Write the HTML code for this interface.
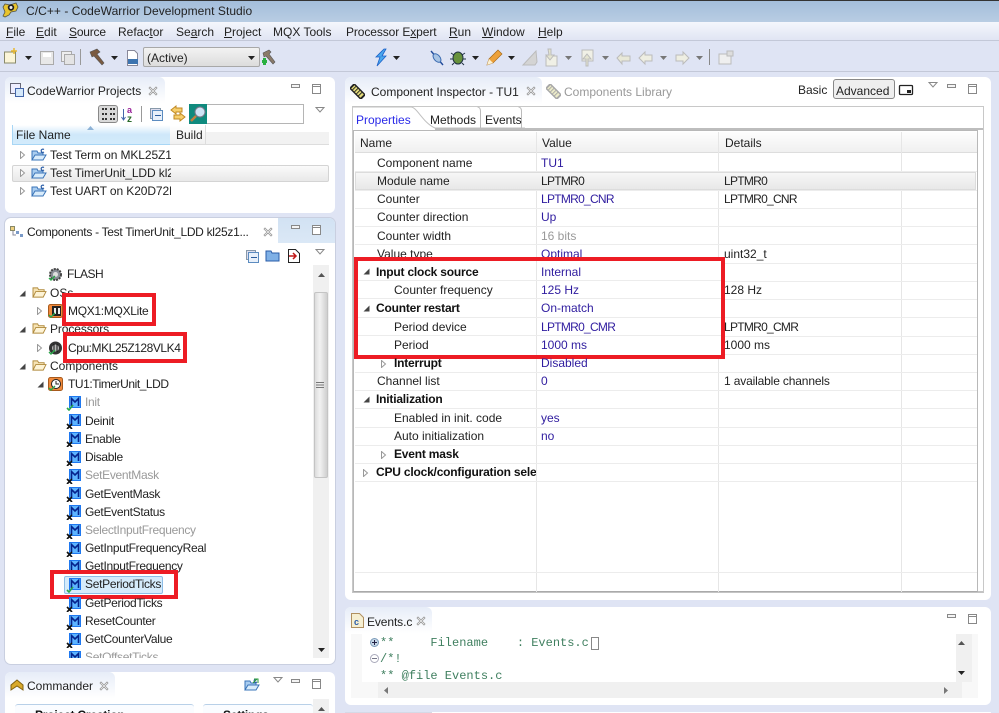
<!DOCTYPE html>
<html style="width:999px;height:713px;overflow:hidden"><head><meta charset="utf-8"><style>
html,body{margin:0;padding:0}
body{width:999px;height:713px;overflow:hidden;position:relative;background:#dfe4f4;font-family:"Liberation Sans",sans-serif;font-size:12px;color:#222}
div,span.t{position:absolute}
#root{left:0;top:0;width:999px;height:713px;overflow:hidden;background:#dfe4f4;filter:blur(.3px)}
.t{white-space:nowrap;line-height:16px}
.w{background:#fff;border-radius:6px}
.b{font-weight:bold;color:#111;letter-spacing:-.2px}
.v{color:#2f1c9f}
.g{color:#999}
.n{letter-spacing:-.3px}
.c{letter-spacing:-.72px}
svg{position:absolute;overflow:visible}
.rl{height:1px;left:355px;width:622px;background:#ececec}
.cl{width:1px;background:#e6e6e6;top:132px;height:460px}
.red{border:4px solid #ed1c24;box-sizing:border-box}
</style></head><body>
<svg width="0" height="0" style="left:0;top:0"><defs>
<symbol id="mx" viewBox="0 0 16 16"><rect x="3" y="1" width="12" height="12" fill="#1e78f0"/><rect x="4" y="2" width="10" height="10" fill="#5db4ff"/><path d="M5.500 11V3.500L9 7l3.500-3.500V11" fill="none" stroke="#06248c" stroke-width="1.600"/><path d="M1 11l5 5M6 11l-5 5" stroke="#111" stroke-width="1.600"/></symbol>
<symbol id="mc" viewBox="0 0 16 16"><rect x="3" y="1" width="12" height="12" fill="#1e78f0"/><rect x="4" y="2" width="10" height="10" fill="#5db4ff"/><path d="M5.500 11V3.500L9 7l3.500-3.500V11" fill="none" stroke="#06248c" stroke-width="1.600"/><path d="M1 13l2 2 4-5" fill="none" stroke="#2aa84a" stroke-width="1.600"/></symbol>
<symbol id="fo" viewBox="0 0 16 14"><path d="M1 12V2h5l1 2h6v2" fill="#f6e3b4" stroke="#b08a3c"/><path d="M1 12l3-6h11l-3 6z" fill="#fdf3d6" stroke="#b08a3c"/></symbol>
<symbol id="pr" viewBox="0 0 16 14"><path d="M1 12V3h5l1 2h5v2" fill="#a9cdf0" stroke="#3a74b8"/><path d="M1 12l3-5h11l-3 5z" fill="#d9ecfb" stroke="#3a74b8"/><path d="M13 1.500c-1.400-.8-3 0-2.800 1.500s1.700 1.800 2.800 1" fill="none" stroke="#2d5fa8" stroke-width="1.200"/></symbol>
<symbol id="op" viewBox="0 0 6 8"><path d="M.5.500l4 3.500-4 3.500z" fill="#fff" stroke="#999"/></symbol>
<symbol id="ex" viewBox="0 0 7 7"><path d="M6.500.5v6h-6z" fill="#444"/></symbol>
<symbol id="cx" viewBox="0 0 10 10"><path d="M1 2l1-1 3 3 3-3 1 1-3 3 3 3-1 1-3-3-3 3-1-1 3-3z" fill="#fff" stroke="#999" stroke-width=".8"/></symbol>
<symbol id="dn" viewBox="0 0 7 4"><path d="M0 0h7L3.500 4z" fill="#222"/></symbol>
<symbol id="dg" viewBox="0 0 7 4"><path d="M0 0h7L3.500 4z" fill="#777"/></symbol>
<symbol id="mn" viewBox="0 0 10 4"><rect x=".5" y=".5" width="8" height="3" fill="#f4f4f4" stroke="#888"/></symbol>
<symbol id="mxb" viewBox="0 0 10 11"><rect x=".5" y=".5" width="8" height="9" fill="#fff" stroke="#888"/><path d="M.5 2.500h8" stroke="#888"/></symbol>
<symbol id="vm" viewBox="0 0 11 6"><path d="M1 .5h8L5 5z" fill="#fff" stroke="#888"/></symbol>
<symbol id="ch" viewBox="0 0 16 16"><g transform="rotate(45 8 8)"><rect x="-1" y="4" width="18" height="8" fill="#222"/><rect x="1" y="5.500" width="14" height="5" fill="#e4dc7a"/><path d="M3 5v6M6 5v6M9 5v6M12 5v6" stroke="#222"/></g></symbol>
<symbol id="cg" viewBox="0 0 16 16"><g transform="rotate(45 8 8)"><rect x="-1" y="4" width="18" height="8" fill="#a8a8a8"/><rect x="1" y="5.500" width="14" height="5" fill="#ecebc8"/><path d="M3 5v6M6 5v6M9 5v6M12 5v6" stroke="#a8a8a8"/></g></symbol>
</defs></svg>
<div id="root">

<!-- title -->
<div style="left:0;top:0;width:999px;height:22px;background:linear-gradient(#a4bedb,#b9cde3);border-top:1px solid #333;box-sizing:border-box"></div>
<svg style="left:2px;top:2px" width="17" height="16"><path d="M1 5l2-3 5 1 6-2 2 4-2 4-5 1-2 3-4 2-2-1 2-4z" fill="#e8c42c" stroke="#554" stroke-width=".8"/><circle cx="9" cy="5.500" r="3.200" fill="#222"/><circle cx="9" cy="5.500" r="1.500" fill="#eee"/></svg>
<span class="t" style="left:26px;top:3px;color:#222;letter-spacing:.05px">C/C++ - CodeWarrior Development Studio</span>

<!-- menu -->
<div style="left:0;top:22px;width:999px;height:19px;background:linear-gradient(#f4f6fc,#e0e4f3);border-bottom:1px solid #c3c8d8;box-sizing:border-box"></div>
<span class="t" style="left:6px;top:24px"><u>F</u>ile</span>
<span class="t" style="left:36px;top:24px"><u>E</u>dit</span>
<span class="t" style="left:69px;top:24px;letter-spacing:-.2px"><u>S</u>ource</span>
<span class="t" style="left:118px;top:24px">Refac<u>t</u>or</span>
<span class="t" style="left:176px;top:24px">Se<u>a</u>rch</span>
<span class="t" style="left:224px;top:24px"><u>P</u>roject</span>
<span class="t" style="left:273px;top:24px">MQX Tools</span>
<span class="t" style="left:346px;top:24px;letter-spacing:-.1px">Processor E<u>x</u>pert</span>
<span class="t" style="left:449px;top:24px"><u>R</u>un</span>
<span class="t" style="left:482px;top:24px"><u>W</u>indow</span>
<span class="t" style="left:538px;top:24px"><u>H</u>elp</span>

<!-- toolbar -->
<div style="left:0;top:71px;width:999px;height:1px;background:#c3c8d8"></div>
<svg style="left:0;top:41px" width="999" height="30">
<path d="M4.500 11h11v11h-11z" fill="#fbf5d8" stroke="#8a8a6a"/><path d="M14 7v6M11 10h6" stroke="#e8b830" stroke-width="1.500"/>
<use href="#dn" x="25" y="15" width="7" height="4"/>
<rect x="40.500" y="10.500" width="13" height="13" fill="#e8e8e8" stroke="#aaa"/><rect x="43" y="12" width="8" height="4" fill="#fff"/>
<rect x="61.500" y="10.500" width="10" height="10" fill="#eee" stroke="#aaa"/><rect x="64.500" y="13.500" width="10" height="10" fill="#e4e4e4" stroke="#aaa"/>
<path d="M80.500 8v16" stroke="#999"/>
<path d="M90 11l7-3 3 3-3 2 7 9-2 2-8-9-2 1z" fill="#7a5a40" stroke="#555" stroke-width=".6"/>
<use href="#dn" x="111" y="15" width="7" height="4"/>
<path d="M127.500 9.500h7l3 3v12h-10z" fill="#fff" stroke="#889"/><rect x="128" y="18" width="10" height="5" fill="#3d74b0"/>
<path d="M263 12l6-3 2 2-2 2 6 8-2 2-7-8-2 1z" fill="#8a7a6a" stroke="#555" stroke-width=".6"/><path d="M262 19h5v3h-5zM263 17h3v7h-3z" fill="#28b040"/>
<path d="M384 8l-8 8h4l-3 9 9-10h-4l4-7z" fill="#4aa8ee" stroke="#1c60c8" stroke-width=".8"/><use href="#dn" x="393" y="15" width="7" height="4"/>
<path d="M431 10l12 14" stroke="#204a9a" stroke-width="1.400"/><ellipse cx="437" cy="17" rx="3" ry="5" fill="#a8c4e4" stroke="#3a6ab0" transform="rotate(-40 437 17)"/>
<ellipse cx="458" cy="17" rx="5" ry="6" fill="#67923c" stroke="#234"/><path d="M451 12l3 2M465 12l-3 2M450 18h3M466 18h-3M452 24l2-2M464 24l-2-2" stroke="#234"/>
<use href="#dn" x="472" y="15" width="7" height="4"/>
<path d="M487 24l2-6 9-9 4 4-9 9z" fill="#eda13a" stroke="#a76a18" stroke-width=".7"/><path d="M487 24l2-6 4 4z" fill="#fbf0d0"/>
<use href="#dn" x="508" y="15" width="7" height="4"/>
<path d="M523 24l13-14 1 11-2 3z" fill="#d4d4d4" stroke="#bbb"/>
<rect x="546" y="15" width="11" height="10" fill="#f0f0e6" stroke="#bbb"/><path d="M548 8h3v6h3l-4 5-4-5h3z" fill="#e4e4d0" stroke="#bbb"/>
<use href="#dg" x="565" y="15" width="7" height="4"/>
<rect x="582" y="9" width="11" height="11" fill="#f0f0e6" stroke="#bbb"/><path d="M586 25v-7h-3l4-5 4 5h-3v7z" fill="#e4e4d0" stroke="#bbb"/>
<use href="#dg" x="602" y="15" width="7" height="4"/>
<path d="M617 17l5-5v3h8v5h-8v3z" fill="#e8e8d8" stroke="#bbb"/>
<path d="M639 17l6-6v3h7v6h-7v3z" fill="#eeeee2" stroke="#bbb"/><use href="#dg" x="660" y="15" width="7" height="4"/>
<path d="M689 17l-6-6v3h-7v6h7v3z" fill="#eeeee2" stroke="#bbb"/><use href="#dg" x="696" y="15" width="7" height="4"/>
<path d="M709.500 8v16" stroke="#888"/>
<rect x="719" y="13" width="12" height="10" fill="#efefef" stroke="#bbb"/><rect x="727" y="10" width="6" height="5" fill="#ddd" stroke="#bbb"/>
</svg>
<div style="left:143px;top:47px;width:117px;height:20px;box-sizing:border-box;border:1px solid #a8a8a8;border-radius:2px;background:linear-gradient(#f2f2f2,#dcdcdc)"></div>
<span class="t" style="left:147px;top:50px">(Active)</span>
<svg style="left:248px;top:56px" width="7" height="4"><use href="#dn" width="7" height="4"/></svg>

<!-- projects panel -->
<div class="w" style="left:5px;top:77px;width:330px;height:136px"></div>
<div style="left:5px;top:77px;width:160px;height:26px;background:linear-gradient(#e7edf8,#fff);border-radius:6px 6px 0 0"></div>
<svg style="left:10px;top:83px" width="14" height="14"><rect x=".5" y=".5" width="10" height="10" fill="#eef" stroke="#667"/><rect x="5.500" y="5.500" width="8" height="8" fill="#d5e8fa" stroke="#46a"/></svg>
<span class="t" style="left:27px;top:83px">CodeWarrior Projects</span>
<svg style="left:148px;top:86px" width="10" height="10"><use href="#cx" width="10" height="10"/></svg>
<svg style="left:291px;top:84px" width="10" height="4"><use href="#mn" width="10" height="4"/></svg>
<svg style="left:312px;top:84px" width="10" height="11"><use href="#mxb" width="10" height="11"/></svg>
<div style="left:98px;top:105px;width:20px;height:18px;box-sizing:border-box;border:1px solid #888;border-radius:3px;background:#d9d9d9"></div>
<svg style="left:101px;top:107px" width="16" height="14"><path d="M1 2h5M1 7h5M1 12h5M9 2h5M9 7h5M9 12h5" stroke="#333" stroke-width="2" stroke-dasharray="2 1"/></svg>
<svg style="left:120px;top:105px" width="20" height="18"><path d="M3.500 4v11M1.500 12l2 3 2-3" fill="none" stroke="#4466aa"/><text x="7" y="8" font-size="9" font-weight="bold" fill="#992299" font-family="Liberation Sans">a</text><text x="7" y="17" font-size="10" font-weight="bold" fill="#2a6a2a" font-family="Liberation Sans">z</text></svg>
<div style="left:141px;top:106px;width:1px;height:16px;background:#999"></div>
<svg style="left:150px;top:108px" width="14" height="14"><rect x=".5" y=".5" width="10" height="10" fill="#dde" stroke="#89a"/><rect x="2.500" y="2.500" width="10" height="10" fill="#e8f0fa" stroke="#5c8cc0"/><path d="M5 7.500h6" stroke="#2c5c9c"/></svg>
<svg style="left:170px;top:105px" width="16" height="17"><path d="M1 5l5-4v2h6v4H6v2zM15 12l-5-4v2H4v4h6v2z" fill="#f6cf6e" stroke="#c08820"/></svg>
<div style="left:189px;top:104px;width:18px;height:20px;background:#0f8a7e"></div>
<svg style="left:189px;top:105px" width="18" height="18"><circle cx="11" cy="7" r="5" fill="#cfe4f6" stroke="#778"/><path d="M7 11l-5 5" stroke="#c08040" stroke-width="2.500"/></svg>
<div style="left:207px;top:104px;width:97px;height:20px;box-sizing:border-box;border:1px solid #b5b5b5;border-left:0;background:#fff"></div>
<svg style="left:315px;top:107px" width="11" height="6"><use href="#vm" width="11" height="6"/></svg>
<div style="left:12px;top:125px;width:158px;height:20px;background:linear-gradient(#fff,#cfe8fa 50%,#d3ebfb);border-left:1px solid #a8d6f5;border-bottom:1px solid #a8d6f5;box-sizing:border-box"></div>
<div style="left:170px;top:132px;width:159px;height:13px;background:#f2f2f2;border-bottom:1px solid #ddd;box-sizing:border-box"></div>
<div style="left:170px;top:125px;width:36px;height:20px;background:linear-gradient(#fff,#f0f0f0);border-right:1px solid #ddd;box-sizing:border-box;border-bottom:1px solid #ddd"></div>
<svg style="left:87px;top:126px" width="7" height="4"><path d="M0 4l3.500-4L7 4z" fill="#8db2d6"/></svg>
<span class="t" style="left:16px;top:127px">File Name</span>
<span class="t" style="left:176px;top:127px">Build</span>
<div style="left:12px;top:165px;width:317px;height:17px;background:linear-gradient(#fafafa,#e8e8e8);border:1px solid #d4d4d4;border-radius:2px;box-sizing:border-box"></div>
<svg style="left:20px;top:151px" width="6" height="8"><use href="#op" width="6" height="8"/></svg>
<svg style="left:20px;top:169px" width="6" height="8"><use href="#op" width="6" height="8"/></svg>
<svg style="left:20px;top:187px" width="6" height="8"><use href="#op" width="6" height="8"/></svg>
<svg style="left:31px;top:148px" width="16" height="14"><use href="#pr" width="16" height="14"/></svg>
<svg style="left:31px;top:166px" width="16" height="14"><use href="#pr" width="16" height="14"/></svg>
<svg style="left:31px;top:184px" width="16" height="14"><use href="#pr" width="16" height="14"/></svg>
<div style="left:50px;top:147px;width:121px;height:52px;overflow:hidden">
<span class="t" style="left:0;top:0;letter-spacing:-.1px">Test Term on MKL25Z128VLK4</span>
<span class="t" style="left:0;top:18px;letter-spacing:-.1px">Test TimerUnit_LDD kl25z128</span>
<span class="t" style="left:0;top:36px;letter-spacing:-.1px">Test UART on K20D72MPRO</span></div>

<!-- components panel -->
<div class="w" style="left:5px;top:218px;width:330px;height:446px;box-shadow:0 0 0 1px #c9cfe0"></div>
<div style="left:278px;top:218px;width:57px;height:25px;background:linear-gradient(#d2e2f3,#dbe8f6);border-radius:0 6px 0 0"></div>
<svg style="left:10px;top:226px" width="14" height="12"><rect x=".5" y=".5" width="4" height="4" fill="#eed080" stroke="#886"/><rect x="6" y="5" width="3" height="3" fill="#7a9ac8"/><rect x="10" y="8" width="3" height="3" fill="#7a9ac8"/><path d="M3 5v4h3" fill="none" stroke="#889"/></svg>
<span class="t n" style="left:27px;top:224px">Components - Test TimerUnit_LDD kl25z1...</span>
<svg style="left:263px;top:227px" width="10" height="10"><use href="#cx" width="10" height="10"/></svg>
<svg style="left:291px;top:225px" width="10" height="4"><use href="#mn" width="10" height="4"/></svg>
<svg style="left:312px;top:225px" width="10" height="11"><use href="#mxb" width="10" height="11"/></svg>
<svg style="left:246px;top:250px" width="13" height="13"><rect x=".5" y=".5" width="9" height="9" fill="#dde" stroke="#89a"/><rect x="2.500" y="2.500" width="10" height="10" fill="#e8f0fa" stroke="#5c8cc0"/><path d="M5 7.500h6" stroke="#2c5c9c"/></svg>
<svg style="left:265px;top:250px" width="15" height="12"><path d="M1 11V1h5l1 2h7v8z" fill="#7fb0e6" stroke="#2a5ca8"/></svg>
<svg style="left:288px;top:249px" width="12" height="14"><path d="M.5 .5h7l4 4v9H.5z" fill="#fff" stroke="#222"/><path d="M1 7h7M5 4l3 3-3 3" fill="none" stroke="#c01818" stroke-width="1.500"/></svg>
<svg style="left:315px;top:249px" width="11" height="6"><use href="#vm" width="11" height="6"/></svg>

<!-- scrollbar -->
<div style="left:313px;top:265px;width:16px;height:393px;background:#f0f0f0"></div>
<div style="left:314px;top:292px;width:14px;height:186px;background:linear-gradient(90deg,#dcdcdc,#f2f2f2 40%,#cfcfcf);border:1px solid #c4c4c4;box-sizing:border-box;border-radius:2px"></div>
<svg style="left:318px;top:273px" width="7" height="4"><path d="M0 4l3.500-4L7 4z" fill="#555"/></svg>
<svg style="left:318px;top:648px" width="7" height="4"><use href="#dn" width="7" height="4"/></svg>
<svg style="left:316px;top:382px" width="8" height="6"><path d="M0 .5h8M0 3h8M0 5.500h8" stroke="#777"/></svg>

<!-- tree -->
<svg style="left:48px;top:267px" width="15" height="15"><circle cx="7.500" cy="7.500" r="5.500" fill="#8a8f98" stroke="#444" stroke-width="2" stroke-dasharray="2 1"/><circle cx="7.500" cy="7.500" r="2.500" fill="#e0e0e0"/><path d="M1 11l2 2 4-4" fill="none" stroke="#2aa84a" stroke-width="1.400"/></svg>
<span class="t" style="left:67px;top:266px;letter-spacing:-.5px">FLASH</span>
<svg style="left:19px;top:290px" width="7" height="7"><use href="#ex" width="7" height="7"/></svg>
<svg style="left:32px;top:286px" width="15" height="13"><use href="#fo" width="15" height="13"/></svg>
<span class="t" style="left:50px;top:285px">OSs</span>
<svg style="left:19px;top:326px" width="7" height="7"><use href="#ex" width="7" height="7"/></svg>
<svg style="left:32px;top:322px" width="15" height="13"><use href="#fo" width="15" height="13"/></svg>
<span class="t" style="left:50px;top:321px;letter-spacing:-.1px">Processors</span>
<svg style="left:19px;top:363px" width="7" height="7"><use href="#ex" width="7" height="7"/></svg>
<svg style="left:32px;top:359px" width="15" height="13"><use href="#fo" width="15" height="13"/></svg>
<span class="t" style="left:50px;top:358px">Components</span>

<div style="left:62px;top:293px;width:94px;height:33px;background:#fff" class="red"></div>
<div style="left:63px;top:332px;width:124px;height:31px;background:#fff" class="red"></div>
<svg style="left:37px;top:307px" width="6" height="8"><use href="#op" width="6" height="8"/></svg>
<svg style="left:48px;top:304px" width="15" height="15"><rect x=".5" y=".5" width="14" height="13" rx="2" fill="#f08a3c" stroke="#a85a1c"/><rect x="4" y="2" width="9" height="10" fill="#222"/><path d="M6 4h2v6H6zM10 4h2v6h-2z" fill="#eee"/><path d="M1 11l2 2 4-4" fill="none" stroke="#2aa84a" stroke-width="1.400"/></svg>
<span class="t n" style="left:68px;top:303px">MQX1:MQXLite</span>
<svg style="left:37px;top:344px" width="6" height="8"><use href="#op" width="6" height="8"/></svg>
<svg style="left:48px;top:341px" width="15" height="15"><circle cx="7.500" cy="7" r="6.500" fill="#333"/><circle cx="7.500" cy="7" r="3.500" fill="#bbb"/><path d="M6 3v8M9 3v8" stroke="#111"/><path d="M1 11l2 2 4-4" fill="none" stroke="#2aa84a" stroke-width="1.400"/></svg>
<span class="t" style="left:68px;top:340px;letter-spacing:-.45px">Cpu:MKL25Z128VLK4</span>
<svg style="left:37px;top:381px" width="7" height="7"><use href="#ex" width="7" height="7"/></svg>
<svg style="left:48px;top:377px" width="15" height="15"><rect x=".5" y=".5" width="14" height="13" rx="2" fill="#f08a3c" stroke="#a85a1c"/><circle cx="8" cy="7" r="4.500" fill="#fff" stroke="#222"/><path d="M8 4v3h3" fill="none" stroke="#222"/><path d="M1 11l2 2 4-4" fill="none" stroke="#2aa84a" stroke-width="1.400"/></svg>
<span class="t" style="left:68px;top:376px;letter-spacing:-.45px">TU1:TimerUnit_LDD</span>

<svg style="left:66px;top:395px" width="16" height="16"><use href="#mc" width="16" height="16"/></svg><span class="t g n" style="left:85px;top:394px">Init</span>
<svg style="left:66px;top:413px" width="16" height="16"><use href="#mx" width="16" height="16"/></svg><span class="t n" style="left:85px;top:413px">Deinit</span>
<svg style="left:66px;top:431px" width="16" height="16"><use href="#mx" width="16" height="16"/></svg><span class="t n" style="left:85px;top:431px">Enable</span>
<svg style="left:66px;top:450px" width="16" height="16"><use href="#mx" width="16" height="16"/></svg><span class="t n" style="left:85px;top:449px">Disable</span>
<svg style="left:66px;top:468px" width="16" height="16"><use href="#mx" width="16" height="16"/></svg><span class="t g n" style="left:85px;top:467px">SetEventMask</span>
<svg style="left:66px;top:486px" width="16" height="16"><use href="#mx" width="16" height="16"/></svg><span class="t n" style="left:85px;top:486px">GetEventMask</span>
<svg style="left:66px;top:504px" width="16" height="16"><use href="#mx" width="16" height="16"/></svg><span class="t n" style="left:85px;top:504px">GetEventStatus</span>
<svg style="left:66px;top:523px" width="16" height="16"><use href="#mx" width="16" height="16"/></svg><span class="t g n" style="left:85px;top:522px">SelectInputFrequency</span>
<svg style="left:66px;top:541px" width="16" height="16"><use href="#mx" width="16" height="16"/></svg><span class="t n" style="left:85px;top:540px">GetInputFrequencyReal</span>
<svg style="left:66px;top:559px" width="16" height="16"><use href="#mx" width="16" height="16"/></svg><span class="t n" style="left:85px;top:558px">GetInputFrequency</span>
<div style="left:50px;top:570px;width:128px;height:29px;background:#fff" class="red"></div>
<div style="left:64px;top:576px;width:99px;height:18px;box-sizing:border-box;background:#d5ebfb;border:1px solid #8dbde6;border-radius:2px"></div>
<svg style="left:66px;top:577px" width="16" height="16"><use href="#mc" width="16" height="16"/></svg><span class="t n" style="left:85px;top:576px">SetPeriodTicks</span>
<svg style="left:66px;top:596px" width="16" height="16"><use href="#mx" width="16" height="16"/></svg><span class="t n" style="left:85px;top:595px">GetPeriodTicks</span>
<svg style="left:66px;top:614px" width="16" height="16"><use href="#mx" width="16" height="16"/></svg><span class="t n" style="left:85px;top:613px">ResetCounter</span>
<svg style="left:66px;top:632px" width="16" height="16"><use href="#mx" width="16" height="16"/></svg><span class="t n" style="left:85px;top:631px">GetCounterValue</span>
<div style="left:60px;top:648px;width:200px;height:10px;overflow:hidden"><svg style="left:6px;top:2px" width="16" height="16"><use href="#mx" width="16" height="16"/></svg><span class="t g n" style="left:25px;top:1px">SetOffsetTicks</span></div>

<!-- commander -->
<div class="w" style="left:5px;top:672px;width:330px;height:60px"></div>
<div style="left:5px;top:672px;width:110px;height:26px;background:linear-gradient(#e7edf8,#fff);border-radius:6px 6px 0 0"></div>
<svg style="left:10px;top:679px" width="14" height="12"><path d="M1 6l6-5 6 5v5l-6-4-6 4z" fill="#d9a92a" stroke="#806010"/></svg>
<span class="t" style="left:27px;top:678px">Commander</span>
<svg style="left:99px;top:681px" width="10" height="10"><use href="#cx" width="10" height="10"/></svg>
<svg style="left:244px;top:678px" width="16" height="14"><use href="#pr" width="16" height="14"/><path d="M9 5l4-4M10 1h4v4" stroke="#2a9a3a" fill="none"/></svg>
<svg style="left:273px;top:677px" width="11" height="6"><use href="#vm" width="11" height="6"/></svg>
<svg style="left:291px;top:679px" width="10" height="4"><use href="#mn" width="10" height="4"/></svg>
<svg style="left:312px;top:679px" width="10" height="11"><use href="#mxb" width="10" height="11"/></svg>
<div style="left:15px;top:704px;width:179px;height:9px;border-top:1px solid #b8d0e8;border-radius:3px 3px 0 0;overflow:hidden;background:#fafcff"><span class="t b" style="left:20px;top:2px">Project Creation</span></div>
<div style="left:203px;top:704px;width:110px;height:9px;border-top:1px solid #b8d0e8;border-radius:3px 3px 0 0;overflow:hidden;background:#fafcff"><span class="t b" style="left:20px;top:2px">Settings</span></div>
<div style="left:313px;top:699px;width:16px;height:14px;background:#f0f0f0"></div>
<svg style="left:318px;top:707px" width="7" height="4"><path d="M0 4l3.500-4L7 4z" fill="#555"/></svg>

<!-- right panel -->
<div class="w" style="left:345px;top:77px;width:646px;height:523px"></div>
<div style="left:345px;top:77px;width:197px;height:27px;background:linear-gradient(#e7edf8,#fff);border-radius:6px 6px 0 0"></div>
<svg style="left:350px;top:84px" width="15" height="15"><use href="#ch" width="15" height="15"/></svg>
<span class="t" style="left:371px;top:84px">Component Inspector - TU1</span>
<svg style="left:526px;top:86px" width="10" height="10"><use href="#cx" width="10" height="10"/></svg>
<svg style="left:546px;top:84px" width="15" height="15"><use href="#cg" width="15" height="15"/></svg>
<span class="t g" style="left:564px;top:84px">Components Library</span>
<span class="t" style="left:798px;top:82px">Basic</span>
<div style="left:833px;top:79px;width:62px;height:20px;box-sizing:border-box;border:1.500px solid #888;border-radius:3px;background:#efefef"></div>
<span class="t" style="left:836px;top:83px">Advanced</span>
<svg style="left:899px;top:85px" width="14" height="10"><rect x=".5" y=".5" width="13" height="9" rx="1" fill="#fff" stroke="#222" stroke-width="1.300"/><rect x="8" y="5" width="4" height="3" fill="#222"/></svg>
<svg style="left:928px;top:82px" width="11" height="6"><use href="#vm" width="11" height="6"/></svg>
<svg style="left:947px;top:84px" width="10" height="4"><use href="#mn" width="10" height="4"/></svg>
<svg style="left:968px;top:84px" width="10" height="11"><use href="#mxb" width="10" height="11"/></svg>

<!-- inner tabs -->
<div style="left:352px;top:106px;width:632px;height:487px;box-sizing:border-box;border:1px solid #c8c8c8;border-bottom:2px solid #c4c4c4;background:#fff"></div>
<svg style="left:352px;top:106px" width="175" height="24"><path d="M1 1h58c6 0 12 16 24 21h90" fill="none" stroke="#c0c0c0" stroke-width="1"/><path d="M128.500 22V5c0-2-1-4-3-4M169.500 22V5c0-2-1-4-3-4" fill="none" stroke="#bbb"/></svg>
<div style="left:435px;top:128px;width:548px;height:2px;background:#bdbdbd"></div>
<span class="t" style="left:356px;top:112px;color:#2a2ae8">Properties</span>
<span class="t" style="left:430px;top:112px">Methods</span>
<span class="t" style="left:485px;top:112px">Events</span>

<!-- table -->
<div style="left:353px;top:130px;width:625px;height:462px;box-sizing:border-box;border:1px solid #b8b8b8;border-bottom:1px solid #aaa;background:#fff"></div>
<div style="left:355px;top:132px;width:622px;height:21px;background:linear-gradient(#fdfdfd,#f0f0f0);border-bottom:1px solid #ddd;box-sizing:border-box"></div>
<div class="cl" style="left:536px"></div><div class="cl" style="left:718px"></div><div class="cl" style="left:901px"></div>
<div style="left:355px;top:172px;width:621px;height:18px;background:linear-gradient(#f6f6f6,#e8e8e8);border:1px solid #dcdcdc;box-sizing:border-box"></div>
<div class="rl" style="top:171px"></div><div class="rl" style="top:190px"></div><div class="rl" style="top:208px"></div><div class="rl" style="top:226px"></div><div class="rl" style="top:244px"></div><div class="rl" style="top:263px"></div><div class="rl" style="top:281px"></div><div class="rl" style="top:299px"></div><div class="rl" style="top:317px"></div><div class="rl" style="top:336px"></div><div class="rl" style="top:354px"></div><div class="rl" style="top:372px"></div><div class="rl" style="top:390px"></div><div class="rl" style="top:408px"></div><div class="rl" style="top:427px"></div><div class="rl" style="top:445px"></div><div class="rl" style="top:463px"></div><div class="rl" style="top:481px"></div><div class="rl" style="top:572px"></div>

<span class="t" style="left:360px;top:135px">Name</span><span class="t" style="left:542px;top:135px">Value</span><span class="t" style="left:725px;top:135px">Details</span>
<span class="t" style="left:377px;top:155px">Component name</span><span class="t v" style="left:541px;top:155px">TU1</span>
<span class="t" style="left:377px;top:173px">Module name</span><span class="t c" style="left:541px;top:173px">LPTMR0</span><span class="t c" style="left:724px;top:173px">LPTMR0</span>
<span class="t" style="left:377px;top:191px">Counter</span><span class="t v c" style="left:541px;top:191px">LPTMR0_CNR</span><span class="t c" style="left:724px;top:191px">LPTMR0_CNR</span>
<span class="t" style="left:377px;top:209px">Counter direction</span><span class="t v" style="left:541px;top:209px">Up</span>
<span class="t" style="left:377px;top:228px">Counter width</span><span class="t g" style="left:541px;top:228px">16 bits</span>
<span class="t" style="left:377px;top:246px">Value type</span><span class="t v" style="left:541px;top:246px">Optimal</span><span class="t" style="left:724px;top:246px">uint32_t</span>

<div class="red" style="left:354px;top:257px;width:371px;height:102px;background:#fff"></div>
<div class="cl" style="left:536px;top:261px;height:94px"></div><div class="rl" style="top:280px;left:358px;width:363px"></div><div class="rl" style="top:298px;left:358px;width:363px"></div><div class="rl" style="top:317px;left:358px;width:363px"></div><div class="rl" style="top:335px;left:358px;width:363px"></div>

<svg style="left:363px;top:268px" width="7" height="7"><use href="#ex" width="7" height="7"/></svg><span class="t b" style="left:376px;top:264px">Input clock source</span><span class="t v" style="left:541px;top:264px">Internal</span>
<span class="t" style="left:394px;top:282px">Counter frequency</span><span class="t v" style="left:541px;top:282px">125 Hz</span><span class="t" style="left:724px;top:282px">128 Hz</span>
<svg style="left:363px;top:305px" width="7" height="7"><use href="#ex" width="7" height="7"/></svg><span class="t b" style="left:376px;top:300px">Counter restart</span><span class="t v" style="left:541px;top:300px">On-match</span>
<span class="t" style="left:394px;top:319px">Period device</span><span class="t v c" style="left:541px;top:319px">LPTMR0_CMR</span><span class="t c" style="left:724px;top:319px">LPTMR0_CMR</span>
<span class="t" style="left:394px;top:337px">Period</span><span class="t v" style="left:541px;top:337px">1000 ms</span><span class="t" style="left:724px;top:337px">1000 ms</span>

<svg style="left:381px;top:360px" width="6" height="8"><use href="#op" width="6" height="8"/></svg><span class="t b" style="left:394px;top:355px">Interrupt</span><span class="t v" style="left:541px;top:355px">Disabled</span>
<span class="t" style="left:377px;top:373px">Channel list</span><span class="t v" style="left:541px;top:373px">0</span><span class="t" style="left:724px;top:373px;letter-spacing:-.15px">1 available channels</span>
<svg style="left:363px;top:396px" width="7" height="7"><use href="#ex" width="7" height="7"/></svg><span class="t b" style="left:376px;top:391px">Initialization</span>
<span class="t" style="left:394px;top:410px">Enabled in init. code</span><span class="t v" style="left:541px;top:410px">yes</span>
<span class="t" style="left:394px;top:428px">Auto initialization</span><span class="t v" style="left:541px;top:428px">no</span>
<svg style="left:381px;top:451px" width="6" height="8"><use href="#op" width="6" height="8"/></svg><span class="t b" style="left:394px;top:446px">Event mask</span>
<svg style="left:363px;top:469px" width="6" height="8"><use href="#op" width="6" height="8"/></svg>
<div style="left:376px;top:464px;width:160px;height:16px;overflow:hidden"><span class="t b" style="left:0;top:0">CPU clock/configuration selection</span></div>

<!-- editor -->
<div class="w" style="left:345px;top:607px;width:646px;height:98px"></div>
<div style="left:345px;top:607px;width:87px;height:26px;background:linear-gradient(#e7edf8,#fff);border-radius:6px 6px 0 0"></div>
<svg style="left:351px;top:613px" width="13" height="15"><path d="M.5 .5h8l4 4v10H.5z" fill="#f6efd2" stroke="#b09060"/><text x="3" y="12" font-size="9" font-weight="bold" fill="#2a5ca8" font-family="Liberation Sans">c</text></svg>
<span class="t" style="left:367px;top:614px;letter-spacing:-.1px">Events.c</span>
<svg style="left:416px;top:616px" width="10" height="10"><use href="#cx" width="10" height="10"/></svg>
<svg style="left:947px;top:614px" width="10" height="4"><use href="#mn" width="10" height="4"/></svg>
<svg style="left:968px;top:614px" width="10" height="11"><use href="#mxb" width="10" height="11"/></svg>
<div style="left:351px;top:634px;width:627px;height:64px;background:#f8f8f8"></div>
<div style="left:362px;top:634px;width:600px;height:48px;background:#fff"></div>
<div style="left:378px;top:682px;width:584px;height:16px;background:#f0f0f0"></div>
<div style="left:956px;top:634px;width:16px;height:48px;background:#f0f0f0"></div>
<svg style="left:958px;top:641px" width="7" height="4"><path d="M0 4l3.500-4L7 4z" fill="#555"/></svg>
<svg style="left:958px;top:671px" width="7" height="4"><use href="#dn" width="7" height="4"/></svg>
<svg style="left:384px;top:687px" width="4" height="7"><path d="M4 0L0 3.500 4 7z" fill="#777"/></svg>
<svg style="left:944px;top:687px" width="4" height="7"><path d="M0 0l4 3.500L0 7z" fill="#777"/></svg>
<svg style="left:369px;top:637px" width="11" height="11"><circle cx="5.500" cy="5.500" r="4" fill="#c8d8e8" stroke="#7a9ab8"/><path d="M3 5.500h5M5.500 3v5" stroke="#224"/></svg>
<svg style="left:369px;top:653px" width="11" height="11"><circle cx="5.500" cy="5.500" r="4" fill="#fff" stroke="#aab"/><path d="M3 5.500h5" stroke="#778"/></svg>
<div style="font-family:'Liberation Mono',monospace;font-size:12px;color:#3f7f5f">
<span class="t" style="left:380px;top:635px;white-space:pre">**     Filename    : Events.c</span>
<span class="t" style="left:380px;top:651px">/*!</span>
<span class="t" style="left:380px;top:668px;white-space:pre">** @file Events.c</span>
</div>
<div style="left:591px;top:637px;width:8px;height:13px;border:1px solid #888;box-sizing:border-box"></div>

<div class="w" style="left:345px;top:712px;width:646px;height:1px"></div>
<div style="left:345px;top:712px;width:87px;height:1px;background:#d5d9e6"></div>
</div>
</body></html>
